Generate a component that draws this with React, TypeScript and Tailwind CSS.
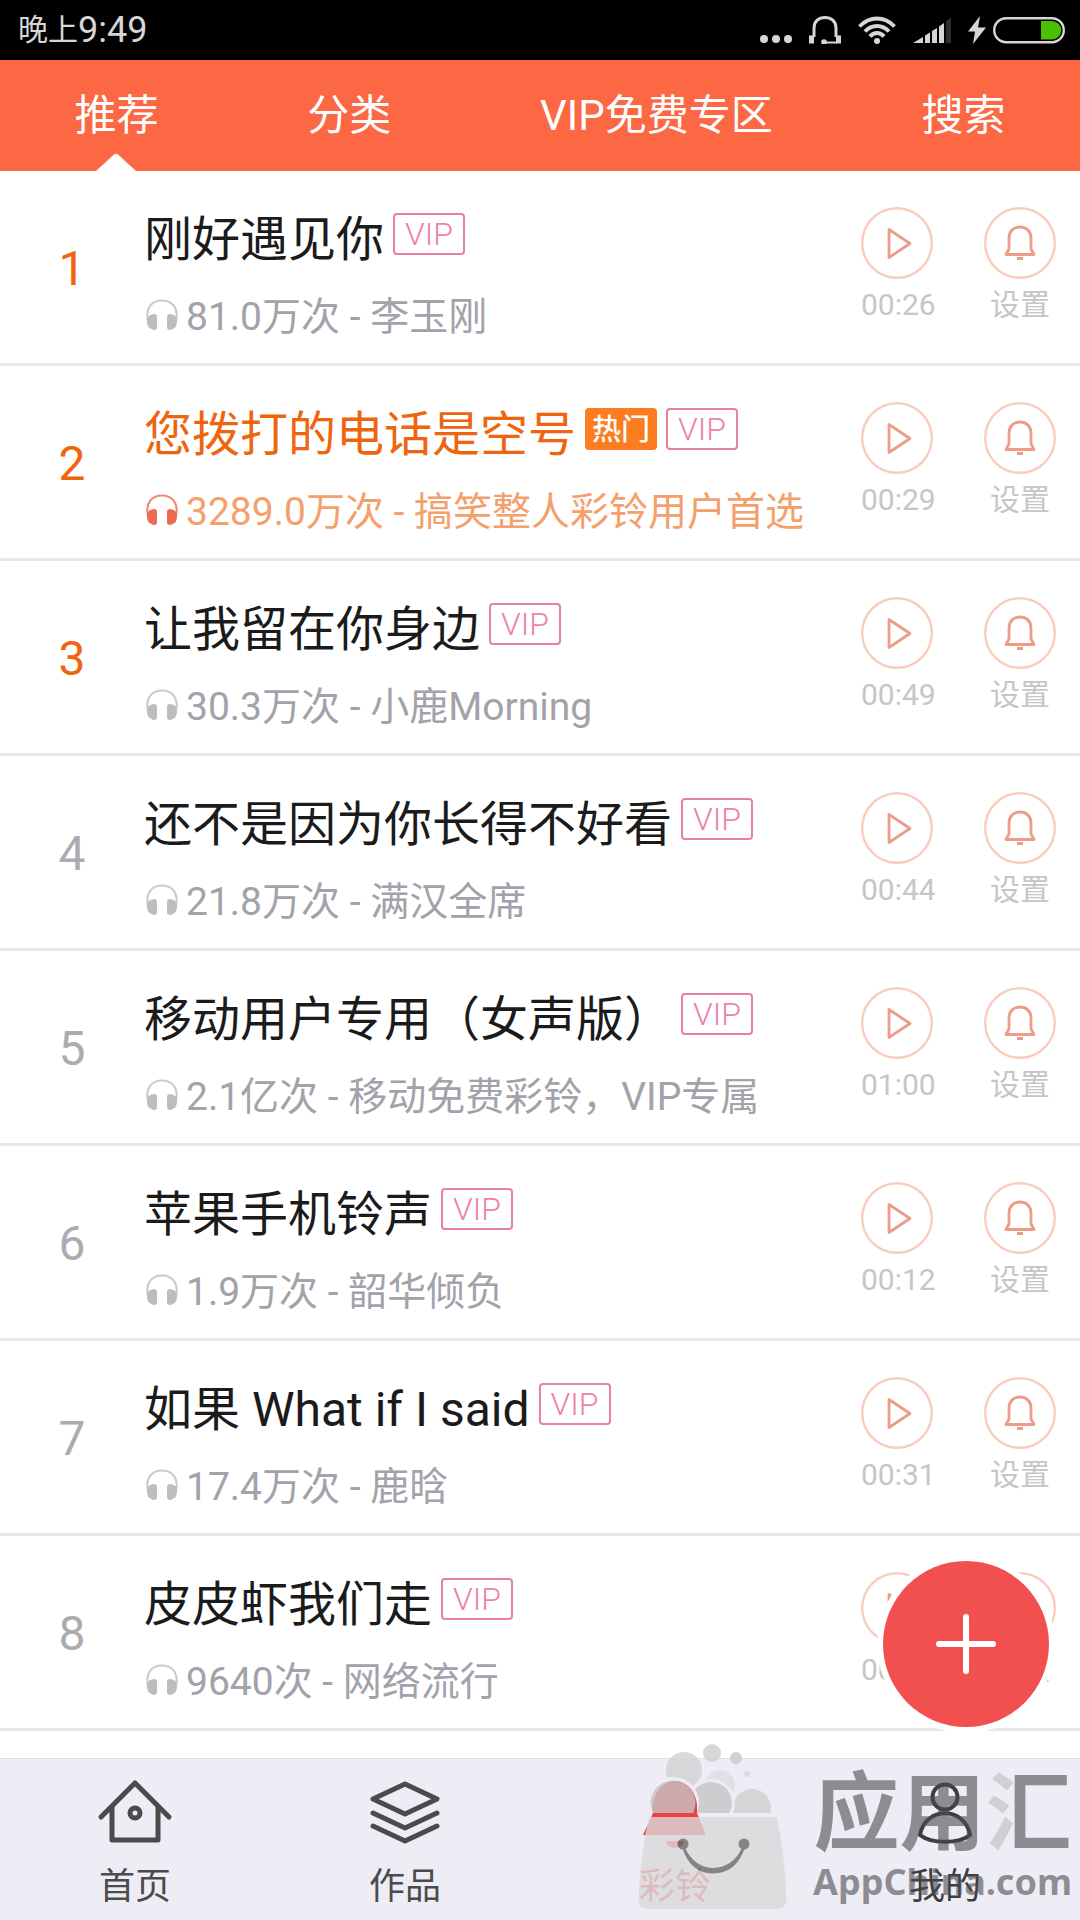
import { useState } from 'react';
import type { ReactNode } from 'react';

type Song = {
  title: string;
  plays: string;
  artist: string;
  duration: string;
  hot?: boolean;
};

const TABS = ['推荐', '分类', 'VIP免费专区', '搜索'];

const SONGS: Song[] = [
  { title: '刚好遇见你', plays: '81.0万次', artist: '李玉刚', duration: '00:26' },
  { title: '您拨打的电话是空号', plays: '3289.0万次', artist: '搞笑整人彩铃用户首选', duration: '00:29', hot: true },
  { title: '让我留在你身边', plays: '30.3万次', artist: '小鹿Morning', duration: '00:49' },
  { title: '还不是因为你长得不好看', plays: '21.8万次', artist: '满汉全席', duration: '00:44' },
  { title: '移动用户专用（女声版）', plays: '2.1亿次', artist: '移动免费彩铃，VIP专属', duration: '01:00' },
  { title: '苹果手机铃声', plays: '1.9万次', artist: '韶华倾负', duration: '00:12' },
  { title: '如果 What if I said', plays: '17.4万次', artist: '鹿晗', duration: '00:31' },
  { title: '皮皮虾我们走', plays: '9640次', artist: '网络流行', duration: '00:30' },
];

function StatusBar() {
  return (
    <div className="flex h-[60px] items-center justify-between bg-black pl-[18px] pr-[15px] text-[#d6d6d6]">
      <div className="flex items-center leading-none">
        <span className="text-[30px]">晚上</span>
        <span className="text-4xl leading-none">9:49</span>
      </div>
      <div className="flex items-center gap-[17px]">
        <svg width="32" height="28" viewBox="0 0 32 28" fill="currentColor">
          <circle cx="4" cy="23" r="4" />
          <circle cx="16" cy="23" r="4" />
          <circle cx="28" cy="23" r="4" />
        </svg>
        <svg width="32" height="28" viewBox="0 0 32 28" fill="none" stroke="currentColor" strokeWidth="3">
          <path d="M5 21V12C5 5 10 1.500 16 1.500S27 5 27 12V21" />
          <path d="M2.500 19.500V27.500M29.500 19.500V27.500" strokeWidth="5" />
          <path d="M28 26.500H16" strokeWidth="2" />
          <circle cx="15" cy="26" r="2.800" fill="currentColor" stroke="none" />
        </svg>
        <svg width="38" height="28" viewBox="0 0 38 28" fill="none" stroke="currentColor" strokeWidth="4">
          <path d="M1.500 10.500Q9 2.500 19 2.500T36.500 10.500" />
          <path d="M7 15.500Q12 10 19 10T31 15.500" />
          <path d="M12 20.500Q15 17 19 17T26 20.500" />
          <circle cx="19" cy="25" r="3" fill="currentColor" stroke="none" />
        </svg>
        <svg width="38" height="28" viewBox="0 0 38 28" fill="currentColor">
          <path d="M0 27L10 21V27Z" />
          <path d="M12 19.500L17 16.500V27H12Z" />
          <path d="M19 15L24 12V27H19Z" />
          <path d="M26 10.500L31 7V27H26Z" />
          <path d="M33 5L38 1.500V27H33Z" fill="#2e2e2e" />
        </svg>
        <div className="flex items-center gap-[7px]">
          <svg width="18" height="28" viewBox="0 0 18 28" fill="currentColor">
            <path d="M12 0L0 15.500H7L5 28L18 11.500H10Z" />
          </svg>
          <svg width="72" height="28" viewBox="0 0 72 28">
            <rect x="1.200" y="2.200" width="69.600" height="24" rx="12" fill="none" stroke="currentColor" strokeWidth="2.400" />
            <path d="M48 5H59A9.200 9.200 0 0 1 59 23.500H48Z" fill="#4cbf05" />
          </svg>
        </div>
      </div>
    </div>
  );
}

function Headphones({ className }: { className: string }) {
  return (
    <svg width="34" height="36" viewBox="-2 0 34 36" className={className} fill="none" stroke="currentColor">
      <path d="M2 22C-1 9 6 1.500 16 1.500S33 9 30 22" strokeWidth="2" opacity="0.800" />
      <path d="M6 15.500Q1 16 1 22.500T6 30Z" fill="currentColor" stroke="none" />
      <rect x="5" y="15" width="6" height="16" rx="3" fill="currentColor" stroke="none" />
      <path d="M26 15.500Q31 16 31 22.500T26 30Z" fill="currentColor" stroke="none" />
      <rect x="21" y="15" width="6" height="16" rx="3" fill="currentColor" stroke="none" />
    </svg>
  );
}

function RoundAction({ label, children }: { label: string; children: ReactNode }) {
  return (
    <button type="button" className="block w-[72px] self-start">
      <svg width="72" height="72" viewBox="0 0 72 72" fill="none" stroke="#ec9c88" strokeWidth="2.800">
        <circle cx="36" cy="36" r="34.800" stroke="#f8cdbd" strokeWidth="2.400" />
        {children}
      </svg>
      <span className="mt-2 block whitespace-nowrap text-[30px] leading-9 text-[#c6c6c6]">{label}</span>
    </button>
  );
}

function SongRow({ song, rank }: { song: Song; rank: number }) {
  return (
    <li className="flex h-[195px] border-b-[3px] border-[#e8e8e8] pr-6">
      <div
        className={`flex w-36 shrink-0 items-center justify-center pt-1 text-5xl ${rank <= 3 ? 'text-[#ee6510]' : 'text-[#acacb0]'}`}
      >
        {rank}
      </div>
      <div className="min-w-0 flex-1 pt-[41px]">
        <div className="flex items-start gap-[9px]">
          <h2 className={`whitespace-nowrap text-5xl leading-14 ${song.hot ? 'text-[#ee6510]' : 'text-[#1b1b1b]'}`}>
            {song.title}
          </h2>
          {song.hot && (
            <span className="mt-px h-[42px] w-[72px] rounded-sm bg-[#fb7d20] text-center text-[29px] font-medium leading-[44px] text-white">
              热门
            </span>
          )}
          <span className="mt-px flex h-[42px] w-[72px] items-center justify-center rounded-sm border-2 border-[#e77fa9] text-[32px] font-light leading-none text-[#ee7fae]">
            VIP
          </span>
        </div>
        <p
          className={`mt-[21px] flex items-center gap-2 whitespace-nowrap text-[39px] leading-14 ${song.hot ? 'text-[#f4a06c]' : 'text-[#a3a2ab]'}`}
        >
          <Headphones className={song.hot ? 'text-[#ee6a50]' : 'text-[#bdbdbf]'} />
          <span>
            {song.plays} - {song.artist}
          </span>
        </p>
      </div>
      <div className="flex gap-[51px] pt-9">
        <RoundAction label={song.duration}>
          <path d="M28 22.500V50.500L49 36.500Z" strokeLinejoin="round" />
        </RoundAction>
        <RoundAction label="设置">
          <path d="M22 47.500H50L47 42V31C47 24 42 20 36 20S25 24 25 31V42Z" strokeLinejoin="round" />
          <path d="M33 51.500H39" strokeWidth="3" />
        </RoundAction>
      </div>
    </li>
  );
}

function NavItem({ label, className, children }: { label: string; className: string; children: ReactNode }) {
  return (
    <a href="#" className={`flex flex-1 flex-col items-center ${className}`}>
      <svg
        width="80"
        height="70"
        viewBox="-40 0 80 70"
        fill="none"
        stroke="currentColor"
        strokeWidth="5"
        strokeLinecap="round"
        strokeLinejoin="round"
      >
        {children}
      </svg>
      <span className="mt-3.5 text-4xl leading-12">{label}</span>
    </a>
  );
}

function BagLogo() {
  return (
    <svg width="152" height="172" viewBox="0 0 152 172" className="opacity-80">
      <defs>
        <clipPath id="rim">
          <rect width="152" height="73" />
        </clipPath>
        <mask id="behind-first">
          <rect width="152" height="172" fill="#fff" />
          <circle cx="36" cy="63" r="26" />
        </mask>
        <mask id="behind-front">
          <rect width="152" height="172" fill="#fff" />
          <circle cx="36" cy="63" r="26" />
          <circle cx="74" cy="63" r="24" />
          <circle cx="115" cy="68" r="22" />
        </mask>
        <mask id="behind-second">
          <rect width="152" height="172" fill="#fff" />
          <circle cx="74" cy="63" r="24" />
        </mask>
      </defs>
      <g clipPath="url(#rim)">
        <circle cx="36" cy="63" r="22.500" fill="#c4c4c4" />
        <circle cx="74" cy="63" r="21" fill="#c5c5c5" mask="url(#behind-first)" />
        <circle cx="115" cy="68" r="19" fill="#cfcfcf" mask="url(#behind-second)" />
        <g mask="url(#behind-front)">
          <circle cx="83" cy="45" r="15" fill="#dddde6" />
          <circle cx="47" cy="30" r="18" fill="#d2d2d2" />
        </g>
      </g>
      <circle cx="75" cy="13" r="9" fill="#cecece" />
      <circle cx="99" cy="18" r="6" fill="#c9c9c9" />
      <circle cx="110" cy="34" r="3" fill="#d6d6de" />
      <path d="M12 77H140Q148 115 149.500 159Q149.500 169 140 169H10Q1 169 1.500 159Q3 115 12 77Z" fill="#dadada" />
      <g fill="#6a6a6a">
        <circle cx="46" cy="104" r="5.500" />
        <circle cx="107" cy="104" r="5.500" />
        <path d="M45 107Q53 133 76 133.500Q100 133 108 107L105 108Q96 127 76 128Q57 127 48 108Z" />
      </g>
    </svg>
  );
}

export default function App() {
  const [tab, setTab] = useState(TABS[0]);

  return (
    <div className="flex min-h-screen flex-col bg-white font-[Roboto,'Noto_Sans_CJK_SC',sans-serif]">
      <StatusBar />
      <nav className="flex h-[111px] justify-around bg-[#fc6744]">
        {TABS.map((t) => (
          <button
            key={t}
            type="button"
            onClick={() => setTab(t)}
            className="relative flex items-center justify-center whitespace-nowrap text-[42px] text-white"
          >
            {t}
            {t === tab && (
              <svg width="40" height="18" viewBox="0 0 40 18" className="absolute bottom-0 fill-white">
                <path d="M0 18L18 1.500Q20 0 22 1.500L40 18Z" />
              </svg>
            )}
          </button>
        ))}
      </nav>

      <ul className="flex-1">
        {SONGS.map((song, i) => (
          <SongRow key={song.title} song={song} rank={i + 1} />
        ))}
      </ul>

      <button
        type="button"
        aria-label="添加"
        className="fixed bottom-[193px] right-[31px] flex size-[166px] items-center justify-center rounded-full bg-[#f24f4f] ring-6 ring-white"
      >
        <svg width="60" height="60" viewBox="0 0 60 60" stroke="#fff" strokeWidth="6" strokeLinecap="round">
          <path d="M30 3V57M3 30H57" />
        </svg>
      </button>

      <footer className="sticky bottom-0 flex h-[162px] border-t border-[#e2e2e4] bg-[#eeedf6] pt-5">
        <NavItem label="首页" className="text-[#4b4b4b]">
          <path d="M-34 38L0 4L34 38" />
          <path d="M-23 28V61H23V28" />
          <circle cy="34" r="5" />
        </NavItem>
        <NavItem label="作品" className="text-[#4b4b4b]">
          <path d="M0 5L32 20L0 35L-32 20Z" />
          <path d="M-32 34L0 49L32 34" />
          <path d="M-32 47L0 62L32 47" />
        </NavItem>
        <NavItem label="彩铃" className="text-[#ee3f49]">
          <path d="M-22 34C-24 14-12 2 0 2S24 14 22 34L31 56H-32Z" fill="currentColor" stroke="none" />
          <path d="M-9 62A9 7 0 0 0 9 62Z" fill="currentColor" stroke="none" />
        </NavItem>
        <NavItem label="我的" className="text-[#3e3e3e]">
          <circle cy="18" r="12.500" strokeWidth="4" />
          <path d="M-25 56C-20 27 20 27 25 56C14 65-14 65-25 56Z" strokeWidth="4" />
        </NavItem>

        <div className="pointer-events-none absolute bottom-2 right-2 flex items-end gap-6">
          <BagLogo />
          <div className="flex flex-col items-center pb-1.5 font-bold text-[#4d4b50]/60">
            <div className="whitespace-nowrap text-[86px] leading-[86px]">
              应用
              <span className="bg-linear-to-r from-[#bcbcbc]/60 from-32% to-[#4d4b50]/60 to-32% bg-clip-text text-transparent">
                汇
              </span>
            </div>
            <div className="font-['Noto_Sans',sans-serif] text-4xl leading-12">AppChina.com</div>
          </div>
        </div>
      </footer>
    </div>
  );
}
